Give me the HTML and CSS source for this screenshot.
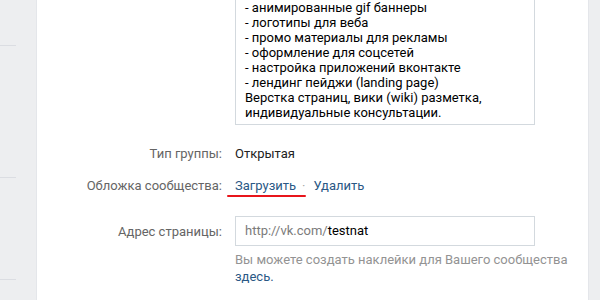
FILE: index.html
```html
<!DOCTYPE html>
<html lang="ru">
<head>
<meta charset="utf-8">
<link rel="stylesheet" href="styles.css">
</head>
<body>
<div class="page">
  <aside class="side">
    <div class="side-sep s1"></div>
    <div class="side-sep s2"></div>
    <div class="side-sep s3"></div>
  </aside>
  <main class="main">
    <div class="row row-desc">
      <div class="label"></div>
      <div class="desc">
        <div>- анимированные gif баннеры</div>
        <div>- логотипы для веба</div>
        <div>- промо материалы для рекламы</div>
        <div>- оформление для соцсетей</div>
        <div>- настройка приложений вконтакте</div>
        <div>- лендинг пейджи (landing page)</div>
        <div>Верстка страниц, вики (wiki) разметка,</div>
        <div>индивидуальные консультации.</div>
      </div>
    </div>
    <div class="row row-type">
      <div class="label">Тип группы:</div>
      <div class="value">Открытая</div>
    </div>
    <div class="row row-cover">
      <div class="label">Обложка сообщества:</div>
      <div class="value"><span class="marked"><a class="link">Загрузить</a><span class="dot">·</span></span><a class="link">Удалить</a></div>
    </div>
    <div class="row row-addr">
      <div class="label">Адрес страницы:</div>
      <div class="input"><span class="prefix">http://vk.com/</span>testnat</div>
    </div>
    <div class="row row-hint">
      <div class="label"></div>
      <div class="hint">Вы можете создать наклейки для Вашего сообщества<br><a class="link">здесь.</a></div>
    </div>
  </main>
  <div class="right"></div>
</div>
</body>
</html>
```

FILE: styles.css
```css
html, body {
  margin: 0;
  padding: 0;
  height: 100%;
  background: #ffffff;
}
body {
  font-family: Roboto, "Noto Sans", Arial, sans-serif;
  font-size: 13px;
  color: #000;
  overflow: hidden;
}
.page {
  display: flex;
  height: 300px;
}
.side {
  width: 36px;
  flex: none;
  background: #edeef0;
  border-right: 1px solid #e4e6ea;
  display: flex;
  flex-direction: column;
}
.side-sep {
  width: 16px;
  height: 1px;
  background: #dbdde2;
}
.s1 { margin-top: 45px; }
.s2 { margin-top: 131px; }
.s3 { margin-top: 101px; }
.main {
  width: 551px;
  flex: none;
  display: flex;
  flex-direction: column;
}
.right {
  flex: 1;
  background: #edeef0;
  border-left: 1px solid #e4e6ea;
}
.row {
  display: grid;
  grid-template-columns: 185px 1fr;
  column-gap: 13px;
  align-items: center;
  line-height: 17px;
}
.label {
  text-align: right;
  color: #656565;
}
.desc {
  width: 300px;
  box-sizing: border-box;
  border: 1px solid #d3d9de;
  border-top: none;
  padding: 0 9px 4px 9px;
  line-height: 15px;
  color: #000;
}
.row-type { margin-top: 20px; }
.row-cover { margin-top: 15px; }
.row-addr { margin-top: 22px; }
.row-hint { margin-top: 5px; align-items: start; }
.value { color: #222; }
.link { color: #2a5885; text-decoration: none; }
.marked {
  position: relative;
}
.marked::after {
  content: "";
  position: absolute;
  left: -8px;
  width: 79px;
  bottom: -4px;
  height: 2px;
  background: #e8151b;
  border-radius: 1px;
}
.dot {
  color: #aaa;
  margin: 0 8px 0 6px;
}
.input {
  width: 300px;
  box-sizing: border-box;
  border: 1px solid #d3d9de;
  height: 30px;
  line-height: 28px;
  padding: 0 9px;
  color: #000;
}
.prefix { color: #7b7b7b; }
.hint {
  color: #939393;
  line-height: 17px;
}
```
